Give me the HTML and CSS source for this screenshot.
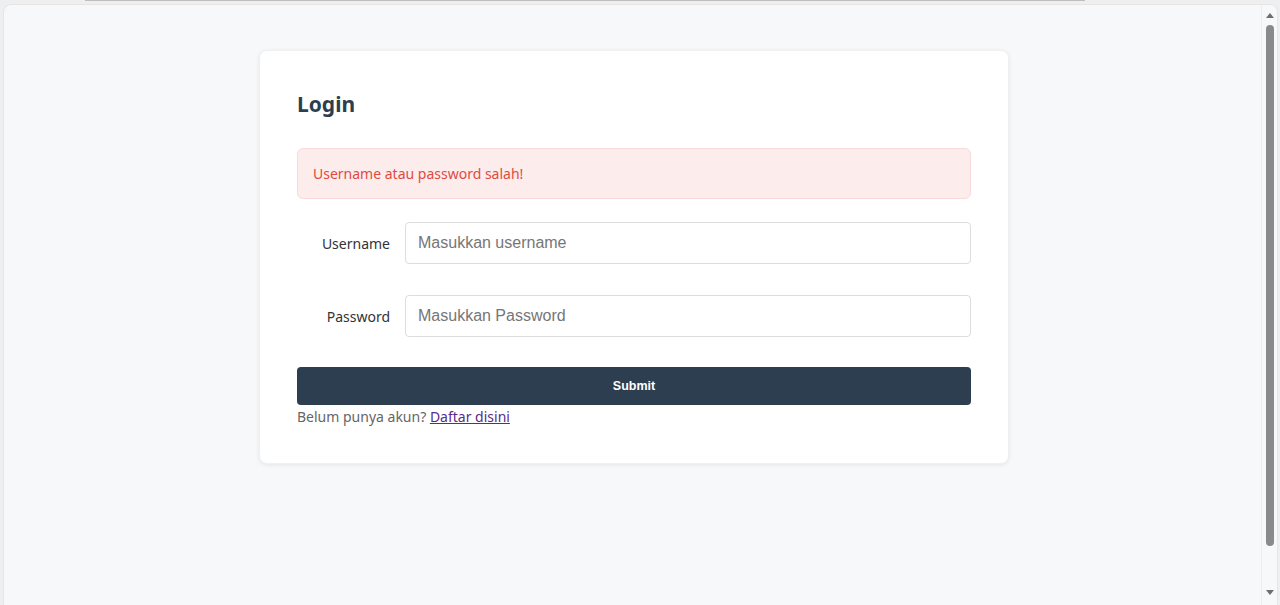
FILE: index.html
```html
<!DOCTYPE html>
<html lang="id">
<head>
<meta charset="utf-8">
<title>Login</title>
<link rel="stylesheet" href="styles.css">
</head>
<body>
<div class="topline"></div>
<div class="frame">
  <main class="page">
    <section class="card">
      <h2 class="title">Login</h2>
      <div class="alert">Username atau password salah!</div>
      <form class="form">
        <div class="row">
          <label class="label" for="u">Username</label>
          <input class="input" id="u" type="text" placeholder="Masukkan username">
        </div>
        <div class="row">
          <label class="label" for="p">Password</label>
          <input class="input" id="p" type="password" placeholder="Masukkan Password">
        </div>
        <button class="submit" type="button">Submit</button>
      </form>
      <p class="foot">Belum punya akun? <a class="link" href="#">Daftar disini</a></p>
    </section>
  </main>
  <div class="scrollbar">
    <span class="arrow up"></span>
    <span class="thumb"></span>
    <span class="arrow down"></span>
  </div>
</div>
</body>
</html>
```

FILE: styles.css
```css
html, body {
  margin: 0;
  padding: 0;
  height: 100%;
}
body {
  background: #efefef;
  font-family: "Noto Sans", "Segoe UI", sans-serif;
  overflow: hidden;
}
.topline {
  height: 1px;
  margin: 0 195px 0 85px;
  background: #bdbdbd;
}
.frame {
  display: flex;
  height: 600px;
  margin: 3px 2px 0 3px;
  background: #f7f8fa;
  border-radius: 8px 8px 0 0;
  border: 1px solid #e6e6e6;
  border-bottom: none;
  overflow: hidden;
}
.page {
  flex: 1;
  display: flex;
  justify-content: center;
  align-items: flex-start;
  padding-top: 45px;
  padding-left: 3px;
}
.card {
  width: 750px;
  box-sizing: border-box;
  background: #fff;
  border-radius: 8px;
  box-shadow: 0 1px 4px rgba(0,0,0,0.08);
  border: 1px solid #eef0f2;
  padding: 38px 37px 36px 37px;
}
.title {
  margin: 0 0 29px;
  font-size: 21px;
  line-height: 30px;
  font-weight: 700;
  color: #2c3e50;
}
.alert {
  height: 51px;
  box-sizing: border-box;
  display: flex;
  align-items: center;
  padding: 0 15px;
  background: #fdecec;
  border: 1px solid #f9d9d9;
  border-radius: 6px;
  color: #e04b3f;
  font-size: 14px;
  margin-bottom: 23px;
}
.form {
  display: flex;
  flex-direction: column;
  gap: 31px;
}
.row {
  display: flex;
  align-items: center;
  gap: 15px;
}
.label {
  width: 93px;
  text-align: right;
  font-size: 14px;
  color: #333;
}
.input {
  flex: 1;
  height: 42px;
  box-sizing: border-box;
  border: 1px solid #dddddd;
  border-radius: 4px;
  padding: 0 12px;
  font-family: "Liberation Sans", Arial, sans-serif;
  font-size: 16px;
  color: #333;
  background: #fff;
}
.input::placeholder {
  color: #767676;
}
.submit {
  height: 38px;
  border: none;
  border-radius: 4px;
  background: #2c3e50;
  color: #fff;
  font-family: "Liberation Sans", Arial, sans-serif;
  font-weight: 700;
  font-size: 12.5px;
  margin-top: -1px;
}
.foot {
  margin: 2px 0 0;
  font-size: 14px;
  line-height: 20px;
  color: #666;
}
.link {
  color: #5a2a8c;
}
.scrollbar {
  width: 15px;
  display: flex;
  flex-direction: column;
  align-items: center;
  background: #f7f8fa;
  border-left: 1px solid #eeeeee;
}
.arrow {
  width: 0;
  height: 0;
  border-left: 4px solid transparent;
  border-right: 4px solid transparent;
}
.arrow.up {
  margin-top: 8px;
  border-bottom: 5px solid #6e6e6e;
}
.arrow.down {
  margin-top: 44px;
  border-top: 5px solid #6e6e6e;
}
.thumb {
  margin-top: 7px;
  width: 8px;
  height: 521px;
  border-radius: 4px;
  background: #8a8a8a;
}
```
